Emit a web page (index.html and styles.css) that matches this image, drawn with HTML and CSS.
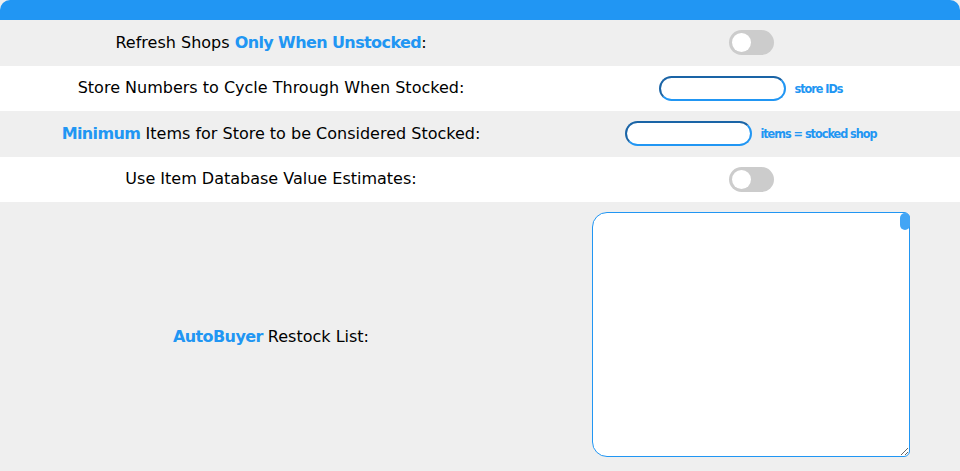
FILE: index.html
```html
<!DOCTYPE html>
<html>
<head>
<meta charset="utf-8">
<link rel="stylesheet" href="styles.css">
</head>
<body>
<div class="panel">
  <div class="topbar"></div>
  <div class="row gray">
    <div class="label">Refresh Shops <span class="hl">Only When Unstocked</span>:</div>
    <div class="ctrl"><span class="toggle"><span class="knob"></span></span></div>
  </div>
  <div class="row">
    <div class="label">Store Numbers to Cycle Through When Stocked:</div>
    <div class="ctrl"><input class="pill" type="text"><span class="hint">store IDs</span></div>
  </div>
  <div class="row gray">
    <div class="label"><span class="hl">Minimum</span> Items for Store to be Considered Stocked:</div>
    <div class="ctrl"><input class="pill" type="text"><span class="hint">items = stocked shop</span></div>
  </div>
  <div class="row">
    <div class="label">Use Item Database Value Estimates:</div>
    <div class="ctrl"><span class="toggle"><span class="knob"></span></span></div>
  </div>
  <div class="row gray big">
    <div class="label"><span class="hl">AutoBuyer</span> Restock List:</div>
    <div class="ctrl top"><div class="areawrap"><textarea class="area"></textarea><span class="thumb"></span></div></div>
  </div>
</div>
</body>
</html>
```

FILE: styles.css
```css
html, body { margin: 0; padding: 0; background: #efefef; }
body { font-family: "DejaVu Sans", sans-serif; font-size: 16px; color: #000; }
.panel { width: 960px; }
.topbar { height: 20px; background: #2196f3; border-radius: 10px 10px 0 0; }
.row { display: grid; grid-template-columns: 542px 418px; height: 45.5px; background: #fff; }
.row.gray { background: #efefef; }
.row.big { height: 269px; }
.label { align-self: center; text-align: center; white-space: nowrap; line-height: 20px; }
.hl { color: #2196f3; font-weight: 600; letter-spacing: -0.6px; }
.ctrl { display: flex; align-items: center; justify-content: center; }
.ctrl.top { align-items: flex-start; padding-top: 10px; }
.toggle { display: block; width: 45px; height: 25px; border-radius: 13px; background: #ccc; position: relative; }
.knob { position: absolute; left: 3px; top: 3px; width: 19px; height: 19px; border-radius: 50%; background: #fff; }
.pill { box-sizing: border-box; width: 127px; height: 25px; border-radius: 13px; border: 2px solid; border-color: #1a64a6 #2196f3 #2196f3 #1a64a6; background: #fff; padding: 0 10px; outline: none; margin: 0; }
.hint { margin-left: 8px; color: #2196f3; font-family: "DejaVu Sans Condensed", "Liberation Sans", sans-serif; font-weight: bold; font-size: 12.5px; letter-spacing: -1px; }
.areawrap { position: relative; width: 318px; height: 245px; }
.area { box-sizing: border-box; display: block; width: 318px; height: 245px; margin: 0; border: 1px solid #2196f3; border-radius: 15px 6px 6px 15px; background: #fff; outline: none; resize: both; overflow-y: scroll; }
.area::-webkit-scrollbar { width: 10px; }
.area::-webkit-scrollbar-track { background: transparent; }
.thumb { position: absolute; right: 0; top: 1px; width: 10px; height: 17px; border-radius: 5px; background: #42a5f5; }
```
